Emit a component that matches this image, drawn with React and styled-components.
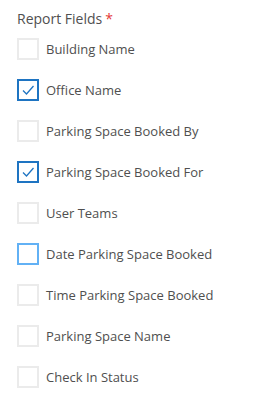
import React from 'react'
import styled, { createGlobalStyle } from 'styled-components'

const GlobalStyle = createGlobalStyle`
  body {
    margin: 0;
    background: #ffffff;
    font-family: "Open Sans", "Liberation Sans", sans-serif;
  }
`

const fields = [
  { label: 'Building Name' },
  { label: 'Office Name', checked: true },
  { label: 'Parking Space Booked By' },
  { label: 'Parking Space Booked For', checked: true },
  { label: 'User Teams' },
  { label: 'Date Parking Space Booked', focused: true },
  { label: 'Time Parking Space Booked' },
  { label: 'Parking Space Name' },
  { label: 'Check In Status' },
]

const Panel = styled.div`
  padding: 9px 17px 0 17px;
  display: flex;
  flex-direction: column;
`

const Title = styled.div`
  font-size: 14px;
  line-height: 20px;
  color: #505050;
  margin-bottom: 9px;
`

const Required = styled.span`
  color: #e53935;
  margin-left: 3px;
`

const List = styled.div`
  display: flex;
  flex-direction: column;
  gap: 19px;
`

const Row = styled.label`
  display: flex;
  align-items: center;
  gap: 7px;
  height: 22px;
`

const Box = styled.span`
  box-sizing: border-box;
  width: 22px;
  height: 22px;
  flex: none;
  display: flex;
  align-items: center;
  justify-content: center;
  border: 2px solid
    ${(p) => (p.$checked ? '#1e74c2' : p.$focused ? '#62b1f5' : '#ebebeb')};
  background: #ffffff;
`

const Text = styled.span`
  font-size: 13px;
  color: #4f4f4f;
  white-space: nowrap;
`

const Check = () => (
  <svg width="14" height="14" viewBox="0 0 14 14">
    <polyline
      points="2,7.5 5.5,11 12.5,3"
      fill="none"
      stroke="#1e74c2"
      strokeWidth="1.3"
    />
  </svg>
)

export default function App() {
  return (
    <>
      <GlobalStyle />
      <Panel>
        <Title>
          Report Fields<Required>*</Required>
        </Title>
        <List>
          {fields.map((f) => (
            <Row key={f.label}>
              <Box $checked={f.checked} $focused={f.focused}>
                {f.checked && <Check />}
              </Box>
              <Text>{f.label}</Text>
            </Row>
          ))}
        </List>
      </Panel>
    </>
  )
}
